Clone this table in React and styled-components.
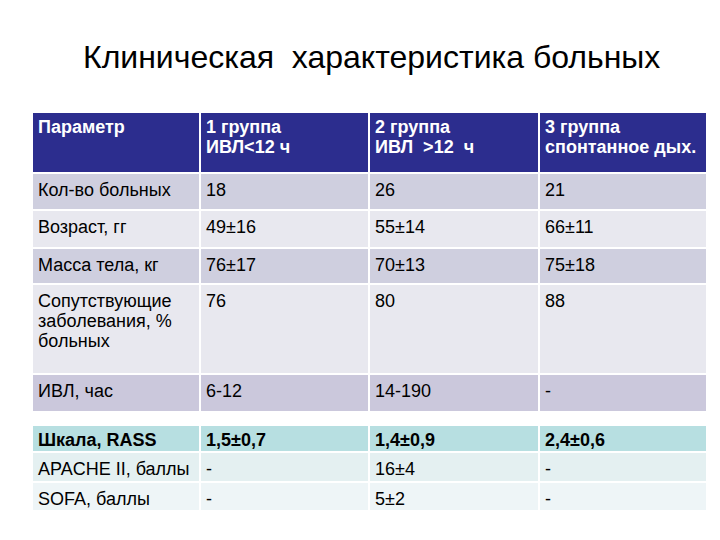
import React from 'react';
import styled, { createGlobalStyle } from 'styled-components';

const GlobalStyle = createGlobalStyle`
  html, body {
    margin: 0;
    padding: 0;
    background: #ffffff;
  }
  body {
    font-family: "Liberation Sans", Arial, sans-serif;
    color: #000000;
  }
`;

const Slide = styled.div`
  width: 720px;
  height: 540px;
  overflow: hidden;
  box-sizing: border-box;
  padding: 38px 15px 0 31px;
`;

const Title = styled.h1`
  margin: 0 0 35px 52px;
  font-size: 32px;
  line-height: 38px;
  font-weight: 400;
  white-space: pre;
`;

const Table = styled.table`
  width: 675px;
  table-layout: fixed;
  border-collapse: collapse;
  font-size: 18px;
  line-height: 20px;
`;

const rowColors = {
  head: '#2c2d8e',
  dark: '#cfcfdf',
  light: '#e8e8ef',
  ivl: '#cbc8dc',
  rass: '#b7dfe1',
  apache: '#e4f0f1',
  sofa: '#eef5f7',
};

const Row = styled.tr`
  height: ${(p) => p.$h}px;
  background: ${(p) => rowColors[p.$tone]};
  color: ${(p) => (p.$tone === 'head' ? '#ffffff' : '#000000')};
  font-weight: ${(p) => (p.$bold ? 700 : 400)};
`;

const Cell = styled.td`
  vertical-align: top;
  padding: ${(p) => p.$pt ?? 6}px 4px 0 5px;
  border: 2px solid #ffffff;
  border-top-width: ${(p) => (p.$tight ? 1 : 2)}px;
  white-space: pre-wrap;
  overflow: hidden;
`;

const Spacer = styled.tr`
  height: 13px;
  background: #ffffff;
`;

const rows = [
  { tone: 'dark', h: 37, cells: ['Кол-во больных', '18', '26', '21'] },
  { tone: 'light', h: 38, cells: ['Возраст, гг', '49±16', '55±14', '66±11'] },
  { tone: 'dark', h: 36, cells: ['Масса тела, кг', '76±17', '70±13', '75±18'] },
  {
    tone: 'light',
    h: 90,
    cells: ['Сопутствующие заболевания, % больных', '76', '80', '88'],
  },
  { tone: 'ivl', h: 38, cells: ['ИВЛ, час', '6-12', '14-190', '-'] },
];

const scores = [
  { tone: 'rass', h: 27, bold: true, pt: 4, cells: ['Шкала, RASS', '1,5±0,7', '1,4±0,9', '2,4±0,6'] },
  { tone: 'apache', h: 30, pt: 6, cells: ['APACHE II, баллы', '-', '16±4', '-'] },
  { tone: 'sofa', h: 29, pt: 6, cells: ['SOFA, баллы', '-', '5±2', '-'] },
];

const renderRow = (r, i) => (
  <Row key={i} $tone={r.tone} $h={r.h} $bold={r.bold}>
    {r.cells.map((c, j) => (
      <Cell key={j} $pt={r.pt} $tight={r.tone === 'apache' || r.tone === 'sofa'}>
        {c}
      </Cell>
    ))}
  </Row>
);

const App = () => {
  return (
    <>
      <GlobalStyle />
      <Slide>
        <Title>Клиническая  характеристика больных</Title>
        <Table>
          <colgroup>
            <col style={{ width: 168 }} />
            <col style={{ width: 169 }} />
            <col style={{ width: 170 }} />
            <col style={{ width: 168 }} />
          </colgroup>
          <tbody>
            <Row $tone="head" $h={61} $bold>
              <Cell $pt={4}>Параметр</Cell>
              <Cell $pt={4}>{'1 группа\nИВЛ<12 ч'}</Cell>
              <Cell $pt={4}>{'2 группа\nИВЛ  >12  ч'}</Cell>
              <Cell $pt={4}>{'3 группа\nспонтанное дых.'}</Cell>
            </Row>
            {rows.map(renderRow)}
            <Spacer>
              <td colSpan={4} />
            </Spacer>
            {scores.map(renderRow)}
          </tbody>
        </Table>
      </Slide>
    </>
  );
};

export default App;
